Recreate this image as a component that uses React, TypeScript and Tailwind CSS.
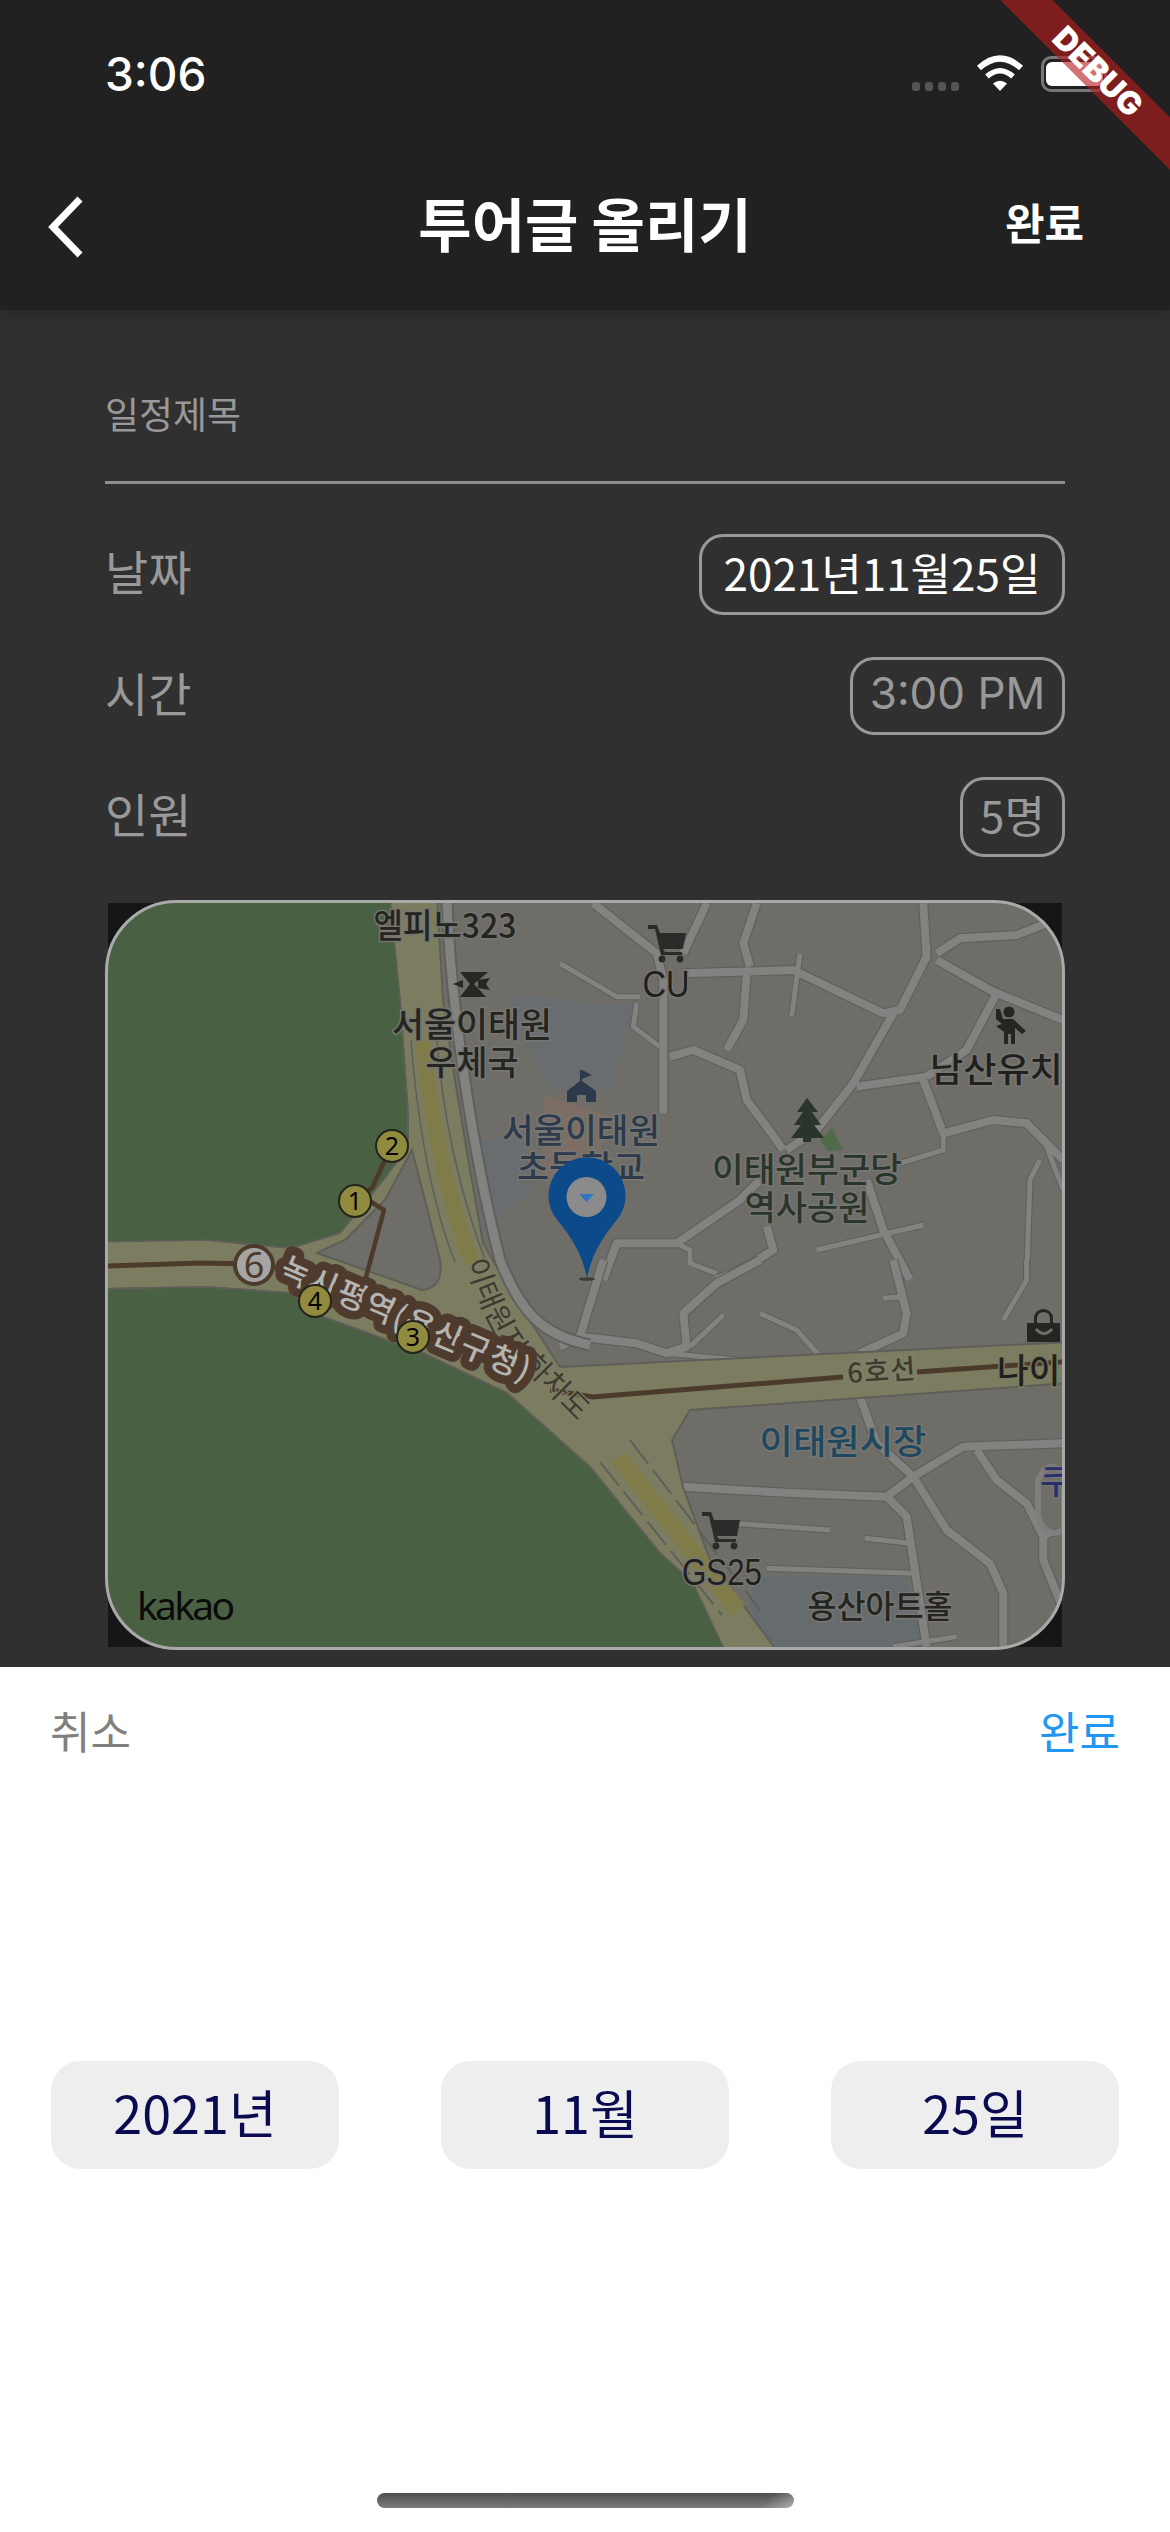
import React from "react";

const KR = "'Noto Sans CJK KR', sans-serif";

type LabelProps = { x: number; y: number; t: string; w?: number; s?: number; c?: string; a?: "middle" | "start"; f?: string; h?: string; fw?: number };
function L({ x, y, t, w, s = 34, c = "#24251f", a = "middle", f = KR, h = "#777672", fw = 500 }: LabelProps) {
  return (
    <text x={x} y={y} textAnchor={a} fontFamily={f} fontSize={s} fontWeight={fw} fill={c} stroke={h} strokeWidth={3} paintOrder="stroke" textLength={w} lengthAdjust={w ? "spacingAndGlyphs" : undefined}>
      {t}
    </text>
  );
}

function Roads({ tx, ty, thick, thin }: { tx: number; ty: number; thick: string[]; thin: string[] }) {
  return (
    <g transform={`translate(${tx} ${ty}) scale(0.3333)`} fill="none" strokeLinejoin="round" strokeLinecap="butt">
      {thin.map((d, i) => <path key={"a" + i} d={d} stroke="#5f5f5c" strokeWidth={21} />)}
      {thick.map((d, i) => <path key={"b" + i} d={d} stroke="#5f5f5c" strokeWidth={31} />)}
      {thin.map((d, i) => <path key={"c" + i} d={d} stroke="#828281" strokeWidth={15} />)}
      {thick.map((d, i) => <path key={"d" + i} d={d} stroke="#828281" strokeWidth={24} />)}
    </g>
  );
}

function Cart({ x, y }: { x: number; y: number }) {
  return (
    <g transform={`translate(${x} ${y})`} fill="#2b2b29">
      <path d="M0 0H9L12 8H38L35 24H15L17 27H34V30H13L7 4H0Z" />
      <circle cx="14" cy="34" r="3.4" />
      <circle cx="32" cy="34" r="3.4" />
    </g>
  );
}

function Badge({ x, y, n }: { x: number; y: number; n: string }) {
  return (
    <g>
      <circle cx={x} cy={y} r={16} fill="#908b3f" stroke="#23241c" strokeWidth={2} />
      <text x={x} y={y + 9} textAnchor="middle" fontFamily="'Noto Sans', sans-serif" fontSize={25} fill="#050505">{n}</text>
    </g>
  );
}

function MapDrawing() {
  return (
    <svg width={954} height={744} viewBox="108 903 954 744" className="block">
      <defs>
        <clipPath id="mapClip"><rect x="105" y="900" width="960" height="750" rx="72" /></clipPath>
        <path id="underpassA" d="M466 1262 C474 1290 486 1320 506 1350" />
        <path id="underpassB" d="M521 1365 L600 1444" />
      </defs>
      <rect x="108" y="903" width="954" height="744" fill="#161616" />
      <g clipPath="url(#mapClip)">
        <rect x="100" y="895" width="970" height="760" fill="#6e6d68" />
        {/* building areas */}
        <path d="M510 993L590 1003H633L613 1090H550L530 1050Z" fill="#696d70" />
        <path d="M470 1143L523 1133L532 1190L482 1232L478 1200Z" fill="#696d70" />
        <path d="M545 1095L610 1115L592 1185L540 1180Z" fill="#7c6e64" />
        <path d="M755 1577H905L930 1647H760L750 1600Z" fill="#666b6e" />
        <Roads
          tx={560}
          ty={880}
          thick={[
            "M100 70L290 220L310 300V700",
            "M370 280L700 270L970 400L1020 390L1100 230L1090 70",
            "M1130 220L1200 175L1370 165L1510 110",
            "M1130 240L1300 335L1510 420",
            "M1000 400L880 610L770 750L680 810",
            "M1100 590L890 620",
            "M1090 600L1150 760L1300 720L1400 730L1510 840",
            "M1310 340L1220 510L1100 590",
            "M560 280L550 420L500 510",
            "M330 530L400 510L540 570L560 660L620 740L670 810",
            "M590 70L550 190L570 260",
            "M440 70L370 220",
            "M920 900L970 1050L1050 1200",
            "M600 900L540 960L350 1090L170 1090L130 1200",
            "M620 1040L640 1110L560 1160L470 1200",
          ]}
          thin={[
            "M0 250L170 350L240 350",
            "M720 220L695 410",
            "M300 500L220 440L230 370",
            "M770 1110L1090 1035",
            "M350 1090L390 1110L390 1150L470 1180",
            "M1440 840L1410 900L1400 1200",
            "M1460 800L1510 930",
            "M1150 760L1150 810L1020 850",
          ]}
        />
        <Roads
          tx={560}
          ty={1260}
          thick={[
            "M130 0L60 230L0 260",
            "M60 230L230 250L320 280L380 260L370 160L470 70L600 0",
            "M1000 0L1040 160L1030 220L900 280",
            "M900 410L950 550L1060 650L1160 810L1290 910L1330 1000L1330 1160",
            "M370 680L530 690L710 700L980 710L1060 650L1210 560L1510 550",
            "M980 710L1040 770L1060 900L1100 1160",
            "M1250 570L1310 660L1400 730L1450 830L1450 900L1510 1050",
          ]}
          thin={[
            "M320 280L640 310",
            "M390 260L490 165",
            "M600 160L710 210L790 300",
            "M970 115L1030 110",
            "M1400 0L1400 60L1330 180",
            "M520 790L810 810",
            "M915 835L1050 850",
            "M620 925L1060 940",
            "M1450 830L1510 810",
            "M1000 1160L1190 1130",
          ]}
        />
        {/* khaki highways */}
        <path d="M388 895L437 895L443 1000L455 1080L470 1170L483 1243L510 1290L560 1367L1070 1342V1383L690 1410L672 1440L683 1487L710 1560L780 1655H700L693 1583L660 1553L590 1467L507 1393L423 1353L323 1317L290 1293L207 1287L100 1289V1240L207 1240L290 1248L340 1233L383 1180L408 1147L408 1113L400 1000Z" fill="#7c7c60" stroke="#5f5f5a" strokeWidth={2} />
        <path d="M317 1253L345 1240L385 1200L412 1150L425 1200L440 1260Q444 1288 422 1290Z" fill="#6e6d68" stroke="#5f5f5a" strokeWidth={2} />
        <path d="M423 1040C428 1100 444 1190 472 1262" fill="none" stroke="#807c4a" strokeWidth={15} />
        <path d="M618 1457L738 1610" fill="none" stroke="#807c4a" strokeWidth={17} />
        <path d="M411 1040C416 1110 430 1200 455 1262M437 1040C442 1110 458 1190 486 1262" fill="none" stroke="#5f5f5a" strokeWidth={1.5} />
        <path d="M600 1462L722 1615M630 1440L760 1610" fill="none" stroke="#5f5f5a" strokeWidth={2} strokeDasharray="30 8" />
        <path d="M447 900C450 1000 472 1150 500 1260C520 1310 540 1335 590 1345" fill="none" stroke="#5f5f5c" strokeWidth={13} />
        <path d="M447 900C450 1000 472 1150 500 1260C520 1310 540 1335 590 1345" fill="none" stroke="#828281" strokeWidth={9} />
        {/* green */}
        <path d="M100 895H390L400 1000L408 1113L408 1147L383 1180L340 1233L290 1248L207 1240L100 1242Z" fill="#4a6043" stroke="#5f5f5a" strokeWidth={1.5} />
        <path d="M100 1289L207 1287L290 1293L323 1317L423 1353L507 1393L590 1467L660 1553L693 1583L727 1655H100Z" fill="#4a6043" stroke="#5f5f5a" strokeWidth={1.5} />
        <path d="M820 1140L832 1128L843 1150L828 1151Z" fill="#4f6b49" />
        <path d="M1038 1480a18 36 0 0 1 26 -4v52a18 30 0 0 1 -26 -12Z" fill="none" stroke="#7e7e7c" strokeWidth={6} />
        {/* subway lines */}
        <path d="M108 1266L200 1263L254 1264" fill="none" stroke="#4c3a2a" strokeWidth={5} />
        <path d="M385 1160L372 1188L360 1195L384 1210L362 1292" fill="none" stroke="#4c3a2a" strokeWidth={4.5} strokeLinejoin="round" />
        <path d="M550 1390L593 1397L617 1395L843 1377M917 1372L1063 1362" fill="none" stroke="#4c3a2a" strokeWidth={5} />
        {/* 이태원지하차도 */}
        <text fontFamily={KR} fontSize={29} fill="#3c3b2e" stroke="#7f7e66" strokeWidth={2.5} paintOrder="stroke">
          <textPath href="#underpassA" startOffset="0">이태원지</textPath>
        </text>
        <text fontFamily={KR} fontSize={29} fill="#3c3b2e" stroke="#7f7e66" strokeWidth={2.5} paintOrder="stroke">
          <textPath href="#underpassB" startOffset="0">하차도</textPath>
        </text>
        {/* 녹사평역 */}
        <text transform="translate(278 1277) rotate(23)" fontFamily={KR} fontSize={32} fontWeight={500} fill="#b4b4b2" stroke="#4f3b2d" strokeWidth={17} paintOrder="stroke" strokeLinejoin="round" textLength={268}>녹사평역(용산구청)</text>
        <circle cx={254} cy={1265} r={19} fill="#a5a5a3" stroke="#4c3a2a" strokeWidth={4} />
        <text x={254} y={1278} textAnchor="middle" fontFamily="'Noto Sans', sans-serif" fontSize={36} fill="#4c3a2a">6</text>
        <Badge x={392} y={1146} n="2" />
        <Badge x={355} y={1201} n="1" />
        <Badge x={315} y={1301} n="4" />
        <Badge x={413} y={1337} n="3" />
        <text transform="translate(848 1383) rotate(-4)" fontFamily={KR} fontSize={27} fontWeight={500} fill="#3c3b2e" stroke="#7f7e66" strokeWidth={6} paintOrder="stroke" textLength={68}>6호선</text>
        {/* icons */}
        <Cart x={648} y={925} />
        <Cart x={702} y={1512} />
        <path d="M460 972H488L474 984L486 997H460L470 984ZM453 984L463 980V988ZM478 980L490 978L486 984L490 990L478 988Z" fill="#272725" />
        <path d="M580 1070H582L592 1075L582 1079V1081L596 1091V1102H586V1095H577V1102H567V1091L580 1081Z" fill="#2c3a4c" />
        <path d="M807 1098L818 1112H812L821 1125H814L824 1138H811V1142H803V1138H791L801 1125H794L803 1112H797Z" fill="#29342a" />
        <g fill="#252624">
          <circle cx="1009" cy="1012" r="5.5" />
          <path d="M996 1009L1000 1009L1003 1019L1013 1019L1026 1031L1022 1034L1015 1028L1015 1044H1011V1034H1008V1044H1004V1032L996 1026L1002 1024L996 1019Z" />
          <path d="M1027 1323H1034V1318A9.5 9 0 0 1 1053 1318V1323H1060V1342H1027ZM1037 1323H1050V1318A6.5 6 0 0 0 1037 1318Z" />
        </g>
        <path d="M1036 1329Q1044 1338 1052 1329" fill="none" stroke="#6e6d68" strokeWidth={3} />
        {/* labels */}
        <L x={445} y={938} t="엘피노323" w={143} s={34} />
        <L x={472} y={1037} t="서울이태원" w={160} />
        <L x={472} y={1075} t="우체국" w={93} />
        <L x={581} y={1143} t="서울이태원" w={158} c="#2c3a4c" />
        <L x={581} y={1180} t="초등학교" w={128} c="#2c3a4c" />
        <L x={666} y={997} t="CU" w={47} s={37} f="'Liberation Sans', sans-serif" fw={400} c="#1f1f1d" />
        <L x={930} y={1082} t="남산유치원" a="start" w={166} c="#20211e" />
        <L x={807} y={1182} t="이태원부군당" w={190} c="#2a352b" />
        <L x={807} y={1220} t="역사공원" w={125} c="#2a352b" />
        <L x={997} y={1383} t="나이키" a="start" w={95} c="#20211e" h="#7b7a5f" />
        <L x={843} y={1454} t="이태원시장" w={167} c="#1e4860" />
        <L x={1040} y={1494} t="쿠폰" a="start" w={64} c="#27306b" />
        <L x={722} y={1585} t="GS25" w={80} s={37} f="'Liberation Sans', sans-serif" fw={400} c="#1f1f1d" />
        <L x={880} y={1618} t="용산아트홀" w={145} s={32} />
        <text x={137} y={1620} fontFamily="'Noto Sans', sans-serif" fontSize={39} fill="#0b0b0b" textLength={98}>kakao</text>
        {/* pin */}
        <ellipse cx={587} cy={1279} rx={8} ry={1.8} fill="#3b3b38" />
        <path d="M587 1278C582 1254 572 1238 558 1221A38.500 38.500 0 1 1 616 1221C602 1238 592 1254 587 1278Z" fill="#0d4a8a" />
        <circle cx={586.500} cy={1197} r={20} fill="#8b8b8b" />
        <path d="M579 1194H594L586.500 1202Z" fill="#2f77c0" />
      </g>
    </svg>
  );
}

function Row({ label, value, bright, h, w, latin }: { label: string; value: string; bright?: boolean; h: string; w: string; latin?: boolean }) {
  return (
    <div className="flex items-center justify-between">
      <span className="pb-[9px] text-[47px] leading-[48px] text-[#999999]">{label}</span>
      <span className={`flex items-center justify-center rounded-[24px] border-[3px] border-[#999999] pb-[6px] leading-[48px] ${latin ? "font-['Inter',sans-serif] text-[44px]" : "text-[44px]"} ${h} ${w} ${bright ? "text-white" : "text-[#999999]"}`}>
        {value}
      </span>
    </div>
  );
}

function Wheel({ t }: { t: string }) {
  return (
    <div className="flex h-[108px] w-[288px] items-center justify-center rounded-[30px] bg-[#eeeeee] pb-[6px] text-[52px] leading-[56px] text-[#0a0a50]">
      {t}
    </div>
  );
}

export default function App() {
  return (
    <div className="relative flex h-[2532px] w-[1170px] flex-col overflow-hidden bg-[#303030] font-['Noto_Sans_CJK_KR',sans-serif]">
      {/* header */}
      <header className="relative z-[1] h-[310px] shrink-0 bg-[#212121] shadow-[0_6px_14px_rgba(0,0,0,0.16)]">
        <div className="flex h-[148px] items-center pl-[105px] pr-[63px]">
          <span className="font-['Inter',sans-serif] text-[46px] font-medium leading-[50px] text-white">3:06</span>
          <div className="ml-auto flex items-center">
            <div className="mt-[24px] flex gap-[5px]">
              <i className="block h-[9px] w-[8px] rounded-[3px] bg-[#555555]" />
              <i className="block h-[9px] w-[8px] rounded-[3px] bg-[#555555]" />
              <i className="block h-[9px] w-[8px] rounded-[3px] bg-[#555555]" />
              <i className="block h-[9px] w-[8px] rounded-[3px] bg-[#555555]" />
            </div>
            <svg width={48} height={36} viewBox="0 0 48 36" className="ml-[17px] mt-[-2px]">
              <path d="M3 13Q24 -6 45 13" fill="none" stroke="#fff" strokeWidth={6} />
              <path d="M11 21.500Q24 10 37 21.500" fill="none" stroke="#fff" strokeWidth={5.500} />
              <path d="M24 36L17 28.500Q24 23 31 28.500Z" fill="#fff" />
            </svg>
            <div className="relative z-20 ml-[17px] flex h-[36px] w-[66px] items-center rounded-[10px] border-[3px] border-[#777777] pl-[2px]">
              <div className="h-[24px] w-[57px] rounded-[6px] bg-white" />
            </div>
          </div>
        </div>
        <div className="grid h-[158px] grid-cols-[1fr_auto_1fr] items-center">
          <svg width={38} height={62} viewBox="0 0 38 62" className="ml-[47px]">
            <path d="M33 3L6 31L33 59" fill="none" stroke="#fff" strokeWidth={7} />
          </svg>
          <h1 className="mb-[10px] text-[58px] font-bold leading-[64px] text-white">투어글 올리기</h1>
          <span className="mb-[12px] justify-self-end pr-[86px] text-[43px] font-bold leading-[48px] text-white">완료</span>
        </div>
      </header>

      {/* form */}
      <main className="shrink-0 px-[105px] pt-[85px]">
        <div className="text-[37px] leading-[36px] text-[#999999]">일정제목</div>
        <div className="mt-[50px] h-[3px] bg-[#8f8f8f]" />
        <div className="mt-[50px] flex flex-col gap-[42px]">
          <Row label="날짜" value="2021년11월25일" bright h="h-[81px]" w="w-[366px]" />
          <Row label="시간" value="3:00 PM" latin h="h-[78px]" w="w-[215px]" />
          <Row label="인원" value="5명" h="h-[80px]" w="w-[105px]" />
        </div>
        <div className="relative mt-[43px] h-[750px] w-[960px] p-[3px]">
          <MapDrawing />
          <div className="absolute inset-0 rounded-[72px] border-[3px] border-[#a9a9a9]" />
        </div>
      </main>

      {/* date picker sheet */}
      <section className="mt-[17px] flex flex-1 flex-col bg-white px-[50px] pt-[41px]">
        <div className="flex justify-between text-[44px] leading-[44px]">
          <span className="text-[#808080]">취소</span>
          <span className="text-[#2196f3]">완료</span>
        </div>
        <div className="mt-[309px] flex justify-between px-[1px]">
          <Wheel t="2021년" />
          <Wheel t="11월" />
          <Wheel t="25일" />
        </div>
        <div className="mx-auto mt-[324px] h-[15px] w-[417px] rounded-[8px] bg-[linear-gradient(135deg,transparent_92%,rgba(255,255,255,0.4)_100%),linear-gradient(to_bottom,#4f4f4f,#7c7c7c)]" />
      </section>

      {/* debug ribbon */}
      <div className="pointer-events-none absolute right-0 top-0 z-10 h-[300px] w-[300px] overflow-hidden">
        <div className="absolute left-[28px] top-[53px] flex h-[37px] w-[400px] rotate-45 items-center justify-center bg-[#b71c1c]/[0.62] font-['Inter',sans-serif] text-[32px] font-black leading-[37px] text-white">
          DEBUG
        </div>
      </div>
    </div>
  );
}
